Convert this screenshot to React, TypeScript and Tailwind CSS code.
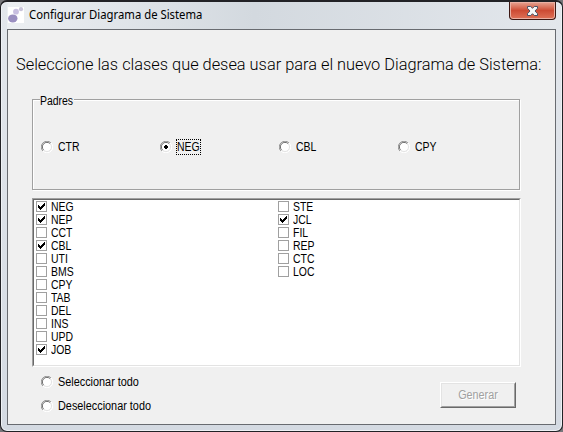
import type { ReactNode } from 'react';

const parents = ['CTR', 'NEG', 'CBL', 'CPY'];
const leftItems = ['NEG', 'NEP', 'CCT', 'CBL', 'UTI', 'BMS', 'CPY', 'TAB', 'DEL', 'INS', 'UPD', 'JOB'];
const rightItems = ['STE', 'JCL', 'FIL', 'REP', 'CTC', 'LOC'];
const checked = ['NEG', 'NEP', 'CBL', 'JOB', 'JCL'];

function Radio({ on = false }: { on?: boolean }) {
  return (
    <svg className="h-3 w-3 shrink-0" viewBox="0 0 12 12">
      <circle cx="6" cy="6" r="5" fill="#fff" />
      <path d="M1.9 10.1A5.5 5.5 0 0 1 10.1 1.9" fill="none" stroke="#989898" />
      <path d="M2.7 9.2A4.5 4.5 0 0 1 9.2 2.7" fill="none" stroke="#696969" />
      <path d="M10.1 1.9A5.5 5.5 0 0 1 1.9 10.1" fill="none" stroke="#fff" />
      <path d="M9.2 2.7A4.5 4.5 0 0 1 2.7 9.2" fill="none" stroke="#e3e3e3" />
      {on && <path d="M5 4h2v1h1v2H7v1H5V7H4V5h1z" fill="#000" shapeRendering="crispEdges" />}
    </svg>
  );
}

function Item({ label }: { label: string }) {
  return (
    <div className="flex h-[13px] items-center gap-1">
      <span className="h-[11px] w-[11px] shrink-0 border border-[#a0a0a0] bg-white">
        {checked.includes(label) && (
          <svg className="h-[9px] w-[9px]" viewBox="0 0 9 9" shapeRendering="crispEdges">
            <path d="M1 3h1v1h1v1h1V4h1V3h1V2h1V1h1v3H7v1H6v1H5v1H4v1H3V7H2V6H1z" fill="#000" />
          </svg>
        )}
      </span>
      <span className="origin-left scale-x-[.87] pt-px text-[12px] leading-[13px]">{label}</span>
    </div>
  );
}

function Option({ children }: { children: ReactNode }) {
  return (
    <div className="flex h-3 items-center gap-[5px]">
      <Radio />
      <span className="origin-left scale-x-[.905] text-[12px] leading-3 whitespace-nowrap">{children}</span>
    </div>
  );
}

export default function App() {
  return (
    <div className="h-[432px] w-[563px] overflow-hidden bg-[#77777b] font-['Liberation_Sans',Arial,sans-serif] text-black">
      <div className="flex h-[432px] w-[563px] flex-col rounded-[7px] border border-t-2 border-[#222226] bg-linear-to-b from-[#e3e7ec] to-[#d4dae2] px-[6px] pb-[6px] shadow-[inset_0_0_0_1px_#eef1f5]">
        <header className="flex h-[27px] shrink-0 justify-between rounded-t-[5px] bg-linear-to-r from-[#eceff2] via-[#d3d9df] via-45% to-[#e3e7ec]">
          <div className="flex gap-[5px] pt-[5px] pl-px">
            <svg className="h-4 w-4" viewBox="0 0 16 16">
              <path fill="#fff" d="M0 0h16v16H0z" />
              <ellipse cx="4.8" cy="11.4" rx="4.7" ry="4" fill="#9a8fc0" />
              <circle cx="8" cy="4.7" r="2.9" fill="#c8bfe0" />
              <circle cx="13" cy="2.2" r="2.1" fill="#c9c4da" />
            </svg>
            <h1 className="origin-left scale-x-[.942] font-['Noto_Sans',sans-serif] text-[12px] leading-4 whitespace-nowrap">
              Configurar Diagrama de Sistema
            </h1>
          </div>
          <button aria-label="Cerrar" className="flex h-[18px] w-[47px] items-center justify-center rounded-b-[4px] border border-t-0 border-[#3c1712] bg-linear-to-b from-[#e5a493] via-[#cd4b34] via-50% to-[#df7157] shadow-[inset_0_0_0_1px_#eab0a3]">
            <svg className="h-[10px] w-[11px]" viewBox="0 0 11 10">
              <path d="M.5.5h3.2l1.8 1.8L7.300.5h3.2v1.800L8 5l2.500 2.700v1.800H7.300L5.500 7.700 3.700 9.500H.5V7.700L3 5 .5 2.300z" fill="#f7f7f7" stroke="#4b5365" />
            </svg>
          </button>
        </header>

        <main className="flex min-h-0 flex-1 flex-col border border-[#686b70] bg-[#f0f0f0] pr-[34px] pl-6">
          <h2 className="-ml-4 w-max origin-left scale-x-[.962] pt-[24px] font-['Roboto',sans-serif] text-[17px] leading-5 font-light whitespace-nowrap">
            Seleccione las clases que desea usar para el nuevo Diagrama de Sistema:
          </h2>

          <section aria-label="Padres" className="mt-[25px] h-[91px] w-[488px] shrink-0 border border-[#a0a0a0] shadow-[1px_1px_0_#fff,inset_1px_1px_0_#fff]">
            <div className="-mt-[6px] ml-[7px] w-[34px] bg-[#f0f0f0]">
              <span className="block w-max origin-left scale-x-[.87] text-[12px] leading-[14px]">Padres</span>
            </div>
            <div className="mt-[33px] ml-2 flex">
              {parents.map((name) => (
                <label key={name} className="flex h-3 w-[119px] items-center gap-1">
                  <Radio on={name === 'NEG'} />
                  <span className={name === 'NEG' ? 'flex h-4 w-[25px] items-center border border-dotted border-black' : 'flex h-4 w-[25px] items-center border border-transparent'}>
                    <span className="origin-left scale-x-[.87] text-[12px] leading-3">{name}</span>
                  </span>
                </label>
              ))}
            </div>
          </section>

          <section className="mt-2 flex h-[169px] w-[489px] shrink-0 border border-t-[#a0a0a0] border-r-white border-b-white border-l-[#a0a0a0]">
            <div className="flex flex-1 border border-t-[#696969] border-r-[#e3e3e3] border-b-[#e3e3e3] border-l-[#696969] bg-white pl-[2px]">
              <div className="w-[242px]">
                {leftItems.map((label) => <Item key={label} label={label} />)}
              </div>
              <div>
                {rightItems.map((label) => <Item key={label} label={label} />)}
              </div>
            </div>
          </section>

          <footer className="flex w-[484px] justify-between pt-[9px] pl-[9px]">
            <div className="flex flex-col gap-3">
              <Option>Seleccionar todo</Option>
              <Option>Deseleccionar todo</Option>
            </div>
            <button disabled className="mt-[6px] h-[26px] w-[76px] border border-t-white border-r-[#696969] border-b-[#696969] border-l-white">
              <span className="flex h-full items-center justify-center border border-t-[#e3e3e3] border-r-[#a0a0a0] border-b-[#a0a0a0] border-l-[#e3e3e3] text-[12px] text-[#a0a0a0] [text-shadow:1px_1px_0_#fff]">
                <span className="scale-x-[.9]">Generar</span>
              </span>
            </button>
          </footer>
        </main>
      </div>
    </div>
  );
}
